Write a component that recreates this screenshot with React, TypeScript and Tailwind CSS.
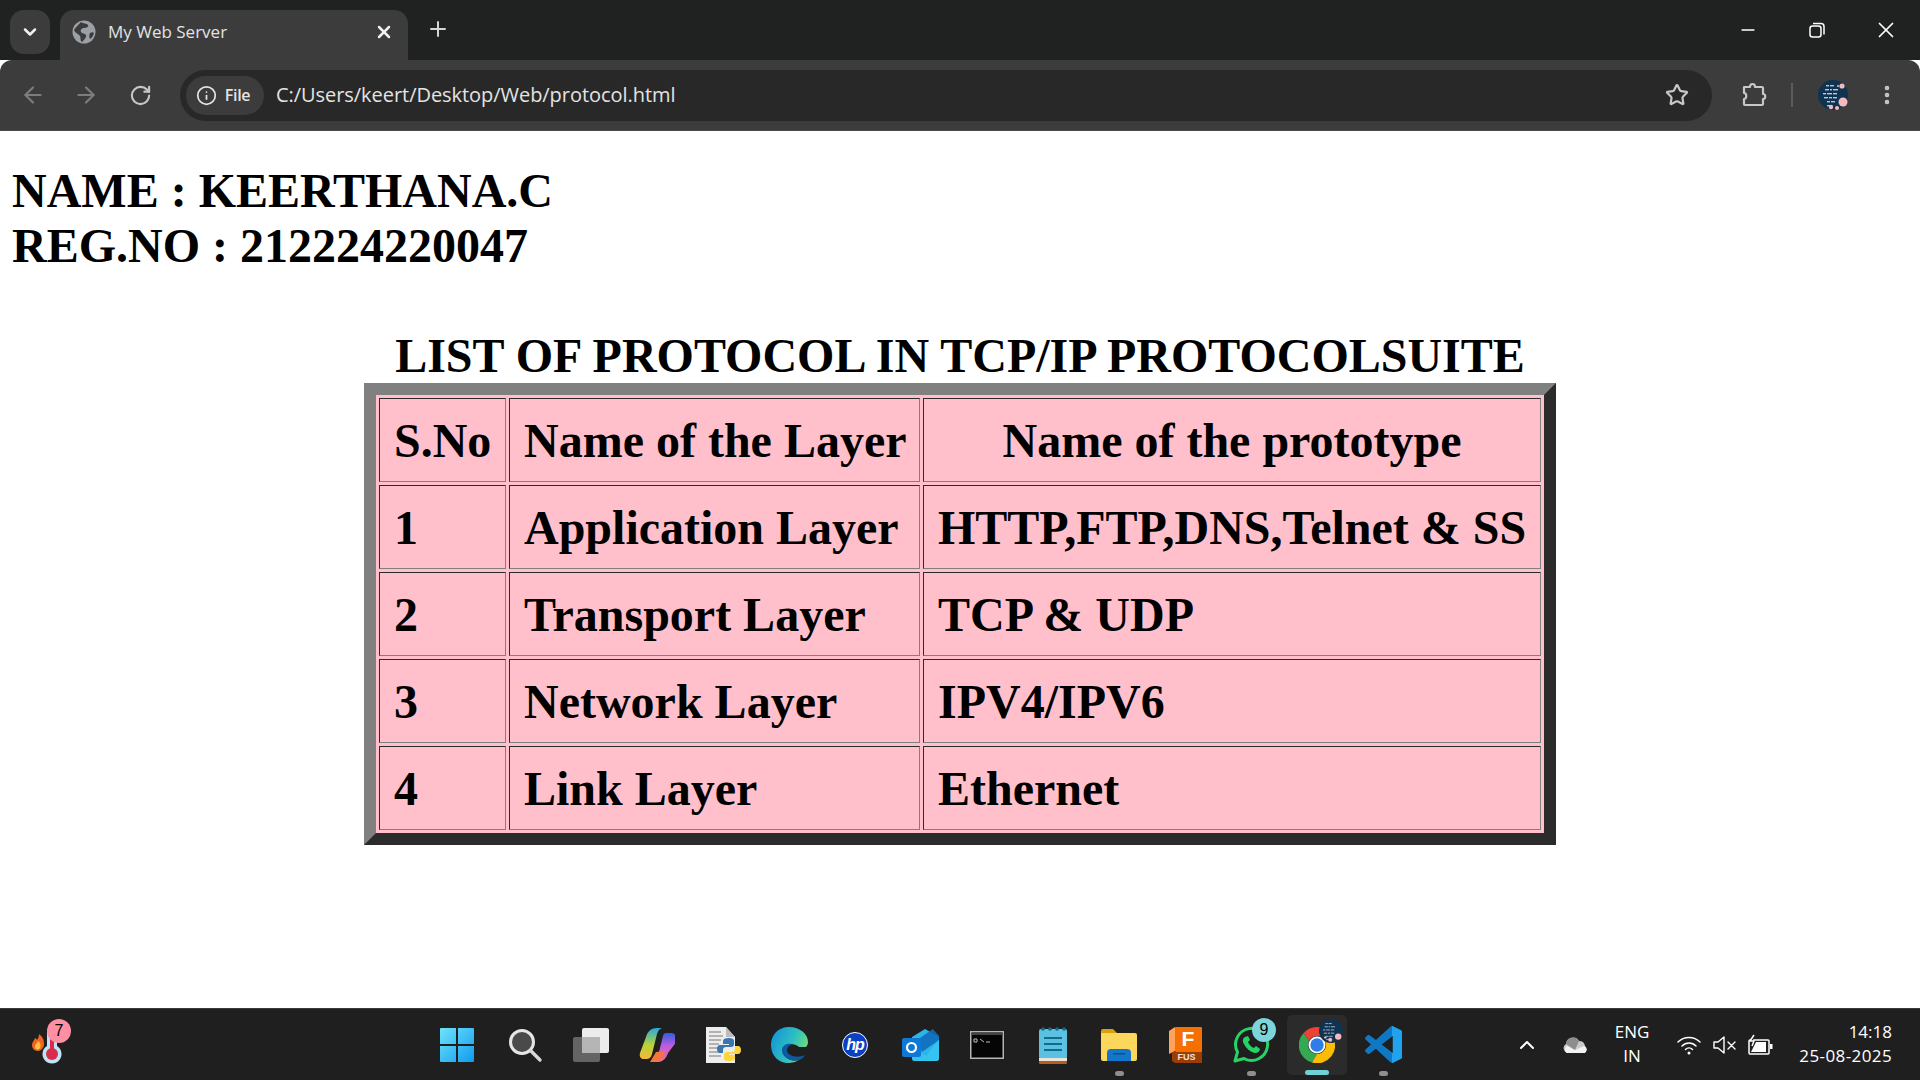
import React from "react";
import { ArrowLeft, ArrowRight, ChevronDown, ChevronUp, Info, Minus, MoreVertical, Plus, RotateCw, Star, X } from "lucide-react";

const rows = [
	["1", "Application Layer", "HTTP,FTP,DNS,Telnet & SS"],
	["2", "Transport Layer", "TCP & UDP"],
	["3", "Network Layer", "IPV4/IPV6"],
	["4", "Link Layer", "Ethernet"],
];

const cell =
	"border border-t-[#2b2b2b] border-l-[#2b2b2b] border-r-[#808080] border-b-[#808080] h-[84px] px-[14px] py-0 text-left whitespace-nowrap";

// tiny handwriting marks on the profile picture
const scribble = [
	[8, 5, 3], [12, 5, 4], [7, 9, 4], [12, 9, 2], [15, 9, 5], [5, 13, 3], [9, 13, 5], [15, 13, 4],
	[6, 17, 4], [11, 17, 3], [15, 17, 4], [9, 21, 3], [13, 21, 4], [9, 25, 4],
];

const TabGlobe = () => (
	<svg width="24" height="24" viewBox="0 0 24 24">
		<circle cx="12" cy="12" r="11.500" fill="#9aa0a6" />
		<path d="M9 2c2 2 6 1 7 3s-2 3-4 3-4 2-3 4 4 1 5 3-2 5-4 7c-2-1-1-4-2-6S3 13 2 10c2-3 5-6 7-8z" fill="#3c3c3c" />
		<path d="M18 13c2-1 3-1 4 0-1 3-2 5-4 6-1-2-1-4 0-6z" fill="#3c3c3c" />
	</svg>
);

const Puzzle = () => (
	<svg width="26" height="26" viewBox="0 0 26 26" fill="none" stroke="#c7c7c7" strokeWidth="2.200" strokeLinejoin="round">
		<path d="M3 5h6c0-4 5-4 5 0h7c1 0 1 1 1 1v6c3 0 3 5 0 5v5c0 1-1 1-1 1H4c-1 0-1-1-1-1v-5c3 0 3-6 0-6z" />
	</svg>
);

const Avatar = () => (
	<svg width="30" height="30" viewBox="0 0 30 30">
		<circle cx="15" cy="15" r="15" fill="#0f3350" />
		<g fill="#b9c9d6">
			{scribble.map(([x, y, w]) => (
				<rect key={`${x}-${y}`} x={x} y={y} width={w} height="1.400" />
			))}
		</g>
		<g fill="#f7b9c0">
			<circle cx="24" cy="6" r="2.600" />
			<circle cx="25" cy="22" r="4.500" />
			<circle cx="13" cy="27" r="2.200" />
			<circle cx="19" cy="28" r="2" />
			<circle cx="20" cy="6" r="1" />
		</g>
	</svg>
);

const Thermo = () => (
	<div className="relative h-[48px] w-[60px]">
		<svg className="absolute left-0 top-0" width="60" height="48" viewBox="0 0 60 48">
			<path d="M24 13c4 3 5 6 5 10 0 4-3 7-6 7-4 0-6-3-6-6 0-3 2-4 3-7 1 1 2 1 2 2 1-2 2-3 2-6z" fill="#f0641e" />
			<path d="M23 20c3 2 3 5 2 7s-5 2-5-1 2-3 3-6z" fill="#ffc23d" />
			<path d="M32 12a5 5 0 0 1 10 0v13a9.500 9.500 0 1 1-10 0z" fill="#bfe3f7" />
			<rect x="35" y="12" width="4" height="16" fill="#d92b4b" />
			<circle cx="37" cy="33" r="6" fill="#d92b4b" />
		</svg>
		<span className="absolute left-[32px] top-[-2px] flex h-[24px] w-[24px] items-center justify-center rounded-full bg-[#ff8fa3] font-['Liberation_Sans',sans-serif] text-[16px] text-black">
			7
		</span>
	</div>
);

const WinLogo = () => (
	<svg className="mr-[4px]" width="36" height="36" viewBox="0 0 36 36">
		<defs>
			<linearGradient id="win" x1="0" y1="0" x2="1" y2="1">
				<stop offset="0" stopColor="#6fe3fb" />
				<stop offset="1" stopColor="#0f9bf0" />
			</linearGradient>
		</defs>
		<path d="M1 2a1 1 0 0 1 1-1h15v16H1zM19 1h15a1 1 0 0 1 1 1v15H19zM1 19h16v16H2a1 1 0 0 1-1-1zM19 19h16v15a1 1 0 0 1-1 1H19z" fill="url(#win)" />
	</svg>
);

const SearchIcon = () => (
	<svg width="36" height="36" viewBox="0 0 36 36" fill="none">
		<circle cx="15" cy="15" r="11.500" fill="#4a4a4a" stroke="#e6e6e6" strokeWidth="3" />
		<path d="M24 24l9 9" stroke="#d8d8d8" strokeWidth="3.400" strokeLinecap="round" />
	</svg>
);

const TaskView = () => (
	<svg width="38" height="36" viewBox="0 0 38 36">
		<rect x="10" y="1" width="27" height="25" rx="2" fill="#ececec" />
		<rect x="1" y="10" width="27" height="25" rx="2" fill="#6b6b6b" fillOpacity="0.9" />
		<rect x="10" y="10" width="18" height="16" fill="#b5b5b5" />
	</svg>
);

const Copilot = () => (
	<svg width="36" height="36" viewBox="0 0 36 36">
		<defs>
			<linearGradient id="cpl" x1="0" y1="0" x2="0" y2="1">
				<stop offset="0" stopColor="#2aa7e0" />
				<stop offset="0.55" stopColor="#b7d433" />
				<stop offset="1" stopColor="#f6b73c" />
			</linearGradient>
			<linearGradient id="cpr" x1="0" y1="0" x2="0" y2="1">
				<stop offset="0" stopColor="#2f5fe0" />
				<stop offset="0.45" stopColor="#c25be0" />
				<stop offset="1" stopColor="#f0708a" />
			</linearGradient>
		</defs>
		<path d="M7 10c1-3 3-9 11-9h5c-3 1-4 3-5 6l-5 20c-1 4-3 5-6 5H5c-3 0-5-2-4-6z" fill="url(#cpl)" />
		<path d="M29 26c-1 3-4 9-10 9h-6c3-1 5-3 6-6l5-20c1-3 2-3 4-3h3c5 0 8 3 7 8z" fill="url(#cpr)" />
		<path d="M11 35l6-10 9-1c-2 6-4 11-9 11z" fill="#f4743f" />
	</svg>
);

const PyDoc = () => (
	<svg width="36" height="38" viewBox="0 0 36 38">
		<path d="M1 1h20l9 10v26H1z" fill="#ededed" />
		<path d="M21 1v10h9z" fill="#bdbdbd" />
		<g stroke="#777" strokeWidth="1">
			<path d="M4 6h12M4 10h14M4 14h12M4 18h10M4 22h10M4 26h12M4 30h12" />
		</g>
		<path d="M24 12c-4 0-6 1-6 3v3h6v1h-9c-2 0-3 2-3 4s1 4 3 4h3v-3c0-2 1-3 3-3h5c2 0 3-1 3-3v-3c0-2-2-3-5-3z" fill="#3a75b0" />
		<path d="M24 35c4 0 6-1 6-3v-3h-6v-1h9c2 0 3-2 3-4s-1-4-3-4h-3v3c0 2-1 3-3 3h-5c-2 0-3 1-3 3v3c0 2 1 3 4 3z" fill="#ffd43b" />
	</svg>
);

const Edge = () => (
	<svg width="38" height="38" viewBox="0 0 38 38">
		<defs>
			<linearGradient id="edgeA" x1="0" y1="0.3" x2="1" y2="0.7">
				<stop offset="0" stopColor="#1597d6" />
				<stop offset="0.55" stopColor="#2fc0c0" />
				<stop offset="1" stopColor="#7be06a" />
			</linearGradient>
		</defs>
		<path d="M19 1C8 1 1 9 1 19c0 11 8 18 17 18 4 0 8-1 11-3-7 2-15-1-15-9 0-4 3-7 7-7 5 0 8 3 8 3h7c1-1 2-3 2-5C38 8 30 1 19 1z" fill="url(#edgeA)" />
		<path d="M12 23c-1 8 8 13 17 11 3-1 5-3 6-5-4 2-9 2-12 1-4-1-6-3-6-6 0-3 3-5 5-6-5-1-9 1-10 5z" fill="#0c59a4" />
	</svg>
);

const HpLogo = () => (
	<div className="flex h-[26px] w-[26px] items-center justify-center rounded-full border border-white bg-[#0b3fc4]">
		<span className="font-['Liberation_Sans',sans-serif] text-[16px] font-bold italic leading-none tracking-[-1px] text-white">hp</span>
	</div>
);

const Outlook = () => (
	<svg width="38" height="34" viewBox="0 0 38 34">
		<path d="M10 9l13-8 14 8v21a3 3 0 0 1-3 3H13a3 3 0 0 1-3-3z" fill="#2cb6e8" />
		<path d="M15 12l16-11 6 7v4L20 24z" fill="#0f6cbd" fillOpacity="0.9" />
		<path d="M10 20l14 8 13-16v18a3 3 0 0 1-3 3H13a3 3 0 0 1-3-3z" fill="#35c4ef" />
		<rect x="0" y="10" width="19" height="19" rx="2" fill="#0f78d4" />
		<circle cx="9.500" cy="19.500" r="4.500" fill="none" stroke="#fff" strokeWidth="2.200" />
	</svg>
);

const Cmd = () => (
	<svg width="34" height="28" viewBox="0 0 34 28">
		<rect x="0.750" y="0.750" width="32.500" height="26.500" fill="#050505" stroke="#b5b5b5" strokeWidth="1.500" />
		<rect x="1.500" y="1.500" width="31" height="2.500" fill="#444" />
		<path d="M4 8h3v3H4zM10 8l4 3M16 11h4" stroke="#bdbdbd" strokeWidth="1" fill="none" />
	</svg>
);

const Notepad = () => (
	<svg width="30" height="38" viewBox="0 0 30 38">
		<rect x="1" y="3" width="28" height="30" rx="2" fill="#5cc0e0" />
		<rect x="1" y="32" width="28" height="3" fill="#e9e4da" />
		<rect x="1" y="35" width="28" height="3" rx="1" fill="#b85c1e" />
		<g fill="#0e6d8f">
			<circle cx="5" cy="3" r="1.800" />
			<circle cx="12" cy="3" r="1.800" />
			<circle cx="19" cy="3" r="1.800" />
			<circle cx="26" cy="3" r="1.800" />
			<rect x="6" y="11" width="18" height="2" />
			<rect x="6" y="17" width="18" height="2" />
			<rect x="6" y="23" width="18" height="2" />
		</g>
	</svg>
);

const Folder = () => (
	<svg width="38" height="34" viewBox="0 0 38 34">
		<path d="M1 3a2 2 0 0 1 2-2h10l4 4h-16z" fill="#d99f0c" />
		<path d="M1 5h34a2 2 0 0 1 2 2v24a2 2 0 0 1-2 2H3a2 2 0 0 1-2-2z" fill="#fbd75b" />
		<path d="M7 33v-8a4 4 0 0 1 4-4h16a4 4 0 0 1 4 4v8z" fill="#1377c9" />
		<rect x="13" y="25" width="12" height="1.500" fill="#0a4f8f" />
	</svg>
);

const Fusion = () => (
	<div className="relative h-[36px] w-[33px]">
		<svg className="absolute left-0 top-0" width="33" height="36" viewBox="0 0 33 36">
			<path d="M0 4l6-4v24l-6 3z" fill="#ffa25c" />
			<rect x="6" y="0" width="27" height="25" rx="1" fill="#f57000" />
			<path d="M3 25h30v11H6l-3-2z" fill="#9a3d06" />
		</svg>
		<span className="absolute left-[6px] top-[1px] w-[27px] text-center font-['Liberation_Sans',sans-serif] text-[21px] font-bold leading-[22px] text-white">F</span>
		<span className="absolute left-[3px] top-[25px] w-[30px] text-center font-['Liberation_Sans',sans-serif] text-[9px] font-bold leading-[11px] text-[#f4e3d6]">FUS</span>
	</div>
);

const Whatsapp = () => (
	<div className="relative h-[38px] w-[38px]">
		<svg className="absolute left-0 top-0" width="38" height="38" viewBox="0 0 38 38" fill="none">
			<path d="M3 35l2.500-9A16 16 0 1 1 12 32.500z" stroke="#25d366" strokeWidth="3" strokeLinejoin="round" />
			<path d="M13 11c-2 1-3 4-1 7 2 4 6 8 11 9 3 0 5-2 5-4l-4-3-2 2c-3-1-5-4-6-6l2-2-2-4z" fill="#25d366" />
		</svg>
		<span className="absolute left-[20px] top-[-8px] flex h-[24px] w-[24px] items-center justify-center rounded-full bg-[#7bd5da] font-['Liberation_Sans',sans-serif] text-[16px] text-black">
			9
		</span>
	</div>
);

const Chrome = () => (
	<div className="relative h-[36px] w-[36px]">
		<svg className="absolute left-0 top-0" width="36" height="36" viewBox="0 0 36 36">
			<path d="M18 0a18 18 0 0 1 15.600 9H18a9 9 0 0 0-8 5L4.500 6A18 18 0 0 1 18 0z" fill="#ea4335" />
			<path d="M4.500 6L10 14a9 9 0 0 0 8 13l-5 8.500A18 18 0 0 1 4.500 6z" fill="#34a853" />
			<path d="M33.600 9A18 18 0 0 1 13 35.500L18 27a9 9 0 0 0 7.500-14l-1-4z" fill="#fbbc04" />
			<circle cx="18" cy="18" r="8.500" fill="#fff" />
			<circle cx="18" cy="18" r="6.700" fill="#2f7de8" />
		</svg>
		<svg className="absolute left-[20px] top-[-8px]" width="24" height="24" viewBox="0 0 30 30">
			<circle cx="15" cy="15" r="15" fill="#0f3350" />
			<g fill="#8ea5b8">
				{scribble.map(([x, y, w]) => (
					<rect key={`${x}-${y}`} x={x} y={y} width={w} height="1.400" />
				))}
			</g>
			<g fill="#f7b9c0">
				<circle cx="24" cy="22" r="4" />
				<circle cx="14" cy="26" r="2.500" />
				<circle cx="8" cy="23" r="1.500" />
			</g>
		</svg>
	</div>
);

const VsCode = () => (
	<svg width="37" height="37" viewBox="0 0 100 100">
		<defs>
			<linearGradient id="vsc" x1="0" y1="0" x2="1" y2="0">
				<stop offset="0.72" stopColor="#0f78c4" />
				<stop offset="0.72" stopColor="#1fa3ee" />
			</linearGradient>
		</defs>
		<path
			fillRule="evenodd"
			fill="url(#vsc)"
			d="M70.900 99.300c1.600.6 3.400.6 5-.2l20.600-9.900c2.200-1 3.500-3.200 3.500-5.600V16.400c0-2.400-1.400-4.600-3.500-5.600L75.900.9c-2.100-1-4.500-.8-6.400.6-.3.2-.5.4-.7.7L29.400 38.100 12.200 25c-1.600-1.200-3.800-1.100-5.300.2L1.400 30.300c-1.800 1.600-1.800 4.500 0 6.100L16.300 50 1.400 63.600c-1.800 1.600-1.800 4.500 0 6.100l5.500 5c1.500 1.300 3.700 1.400 5.300.2l17.200-13.100 39.400 35.900c.6.600 1.300 1.100 2.100 1.400zM75 27.300L45.100 50 75 72.700z"
		/>
	</svg>
);

const Cloud = () => (
	<svg width="26" height="18" viewBox="0 0 26 18">
		<path d="M5 17a5 5 0 0 1-1-9 7 7 0 0 1 13-3 6 6 0 0 1 6 5 4 4 0 0 1-1 7z" fill="#c9c9c9" />
		<path d="M5 17a4 4 0 0 1 0-7l8 4 9-4a4 4 0 0 1 1 7z" fill="#f2f2f2" />
		<path d="M4 8a7 7 0 0 1 13-3l-4 9z" fill="#8d8d8d" />
	</svg>
);

const Wifi = () => (
	<svg width="24" height="20" viewBox="0 0 24 20" fill="none" stroke="#fff" strokeWidth="1.500" strokeLinecap="round">
		<path d="M1 7c6-6 16-6 22 0M5 11c4-4 10-4 14 0M8.500 14.500c2-2 5-2 7 0" />
		<circle cx="12" cy="18" r="1.500" fill="#fff" stroke="none" />
	</svg>
);

const Muted = () => (
	<svg width="24" height="20" viewBox="0 0 24 20" fill="none" stroke="#fff" strokeWidth="1.400" strokeLinejoin="round">
		<path d="M1 7h4l6-5v16l-6-5H1z" />
		<path d="M15 7l7 7M22 7l-7 7" strokeLinecap="round" />
	</svg>
);

const Battery = () => (
	<svg width="26" height="22" viewBox="0 0 26 22" fill="none" stroke="#fff" strokeWidth="1.500" strokeLinejoin="round">
		<path d="M3 6h18a1 1 0 0 1 1 1v12a1 1 0 0 1-1 1H3a1 1 0 0 1-1-1V7a1 1 0 0 1 1-1z" />
		<rect x="23" y="10" width="2.500" height="5" fill="#fff" stroke="none" />
		<path d="M4 18l5-10h10v10z" fill="#fff" stroke="none" />
		<path d="M7 1L3 7h4l-2 5" stroke="#fff" fill="#1c1c1c" />
	</svg>
);

const centerIcons: { key: string; node: React.ReactNode; open?: boolean }[] = [
	{ key: "win", node: <WinLogo /> },
	{ key: "search", node: <SearchIcon /> },
	{ key: "tasks", node: <TaskView /> },
	{ key: "copilot", node: <Copilot /> },
	{ key: "pydoc", node: <PyDoc /> },
	{ key: "edge", node: <Edge /> },
	{ key: "hp", node: <HpLogo /> },
	{ key: "outlook", node: <Outlook /> },
	{ key: "cmd", node: <Cmd /> },
	{ key: "notepad", node: <Notepad /> },
	{ key: "folder", node: <Folder />, open: true },
	{ key: "fusion", node: <Fusion /> },
	{ key: "whatsapp", node: <Whatsapp />, open: true },
];

export default function App() {
	return (
		<div className="flex h-[1080px] w-[1920px] flex-col overflow-hidden bg-white">
			{/* tab strip */}
			<div className="flex h-[60px] shrink-0 items-end bg-[#202221] font-['Open_Sans',sans-serif]">
				<div className="mb-[6px] ml-[10px] flex h-[44px] w-[40px] items-center justify-center rounded-[14px] bg-[#3c3c3c]">
					<ChevronDown size={20} strokeWidth={3} color="#f0f0f0" />
				</div>
				<div className="ml-[10px] flex h-[50px] w-[348px] items-center rounded-t-[14px] bg-[#3c3c3c] pb-[6px] pl-[12px] pr-[14px]">
					<TabGlobe />
					<span className="ml-[12px] flex-1 text-[17px] text-[#e3e3e3]">My Web Server</span>
					<X size={20} strokeWidth={3} color="#f0f0f0" />
				</div>
				<div className="mb-[19px] ml-[18px]">
					<Plus size={24} strokeWidth={2} color="#d5d5d5" />
				</div>
				<div className="flex-1" />
				<div className="mb-[17px] flex items-center text-white">
					<div className="flex w-[69px] justify-center"><Minus size={20} strokeWidth={2} /></div>
					<div className="flex w-[69px] justify-center">
						<svg width="16" height="16" viewBox="0 0 16 16" fill="none" stroke="#fff" strokeWidth="1.500">
							<rect x="1" y="4" width="11" height="11" rx="2.500" />
							<path d="M4 1.500h8a3 3 0 0 1 3 3v8" />
						</svg>
					</div>
					<div className="flex w-[69px] justify-center"><X size={26} strokeWidth={1.6} /></div>
				</div>
			</div>

			{/* toolbar */}
			<div className="flex h-[71px] shrink-0 items-center rounded-t-[12px] border-b border-[#4a4a4a] bg-[#3c3c3c] font-['Open_Sans',sans-serif]">
				<div className="flex w-[180px] items-center pl-[20px]">
					<div className="flex w-[53px]"><ArrowLeft size={26} strokeWidth={2} color="#7d7d7d" /></div>
					<div className="flex w-[56px]"><ArrowRight size={26} strokeWidth={2} color="#7d7d7d" /></div>
					<RotateCw size={23} strokeWidth={2.200} color="#c7c7c7" />
				</div>
				<div className="flex h-[51px] w-[1532px] items-center rounded-full bg-[#282828] pl-[6px] pr-[23px]">
					<div className="flex h-[39px] w-[78px] items-center justify-center gap-[8px] rounded-full bg-[#3c3c3c] pr-[4px]">
						<Info size={21} strokeWidth={2} color="#e3e3e3" />
						<span className="text-[16px] font-semibold tracking-[-0.3px] text-[#e3e3e3]">File</span>
					</div>
					<span className="ml-[12px] flex-1 text-[20px] tracking-[-0.05px] text-[#e3e3e3]">C:/Users/keert/Desktop/Web/protocol.html</span>
					<Star size={24} strokeWidth={2.200} color="#c7c7c7" />
				</div>
				<div className="ml-[29px] flex"><Puzzle /></div>
				<div className="ml-[24px] h-[24px] w-[2px] bg-[#5c5c5c]" />
				<div className="ml-[25px] flex"><Avatar /></div>
				<div className="ml-[27px] flex"><MoreVertical size={24} strokeWidth={2.600} color="#c7c7c7" /></div>
			</div>

			{/* page */}
			<main className="flex-1 font-['Liberation_Serif',serif] font-bold text-black">
				<div className="pl-[12px] pt-[32px] text-[48px] leading-[55px]">
					<div>NAME : KEERTHANA.C</div>
					<div>REG.NO : 212224220047</div>
				</div>
				<table className="mx-auto mt-[55px] w-[1192px] table-fixed border-separate border-spacing-[3px] border-[12px] border-t-[#808080] border-l-[#808080] border-r-[#2b2b2b] border-b-[#2b2b2b] bg-[#ffc0cb] text-[48px] leading-[55px]">
					<caption className="bg-white text-center">LIST OF PROTOCOL IN TCP/IP PROTOCOLSUITE</caption>
					<thead>
						<tr>
							<th className={`${cell} w-[127px]`}>S.No</th>
							<th className={`${cell} w-[411px]`}>Name of the Layer</th>
							<th className="h-[84px] whitespace-nowrap border border-t-[#2b2b2b] border-l-[#2b2b2b] border-r-[#808080] border-b-[#808080] px-[14px] py-0 text-center">Name of the prototype</th>
						</tr>
					</thead>
					<tbody>
						{rows.map((row) => (
							<tr key={row[0]}>
								{row.map((text) => (
									<td key={text} className={cell}>{text}</td>
								))}
							</tr>
						))}
					</tbody>
				</table>
			</main>

			{/* taskbar */}
			<div className="flex h-[72px] shrink-0 items-center border-t border-[#3a3a3a] bg-[#1f1f1f] font-['Open_Sans',sans-serif] text-white">
				<div className="flex w-[426px] shrink-0 pl-[15px]"><Thermo /></div>
				{centerIcons.map((icon) => (
					<div key={icon.key} className="relative flex h-[71px] w-[66px] shrink-0 items-center justify-center">
						{icon.node}
						{icon.open && <span className="absolute bottom-[4px] h-[5px] w-[9px] rounded-full bg-[#8f8f8f]" />}
					</div>
				))}
				<div className="relative mx-[3px] flex h-[60px] w-[60px] shrink-0 items-center justify-center rounded-[5px] bg-[#2b2b2b]">
					<Chrome />
					<span className="absolute bottom-0 h-[5px] w-[24px] rounded-full bg-[#6fd0d6]" />
				</div>
				<div className="relative flex h-[71px] w-[66px] shrink-0 items-center justify-center">
					<VsCode />
					<span className="absolute bottom-[4px] h-[5px] w-[9px] rounded-full bg-[#8f8f8f]" />
				</div>
				<div className="ml-[99px] flex shrink-0 items-center">
					<ChevronUp size={24} strokeWidth={2} color="#fff" />
				</div>
				<div className="ml-[23px] flex shrink-0"><Cloud /></div>
				<div className="mb-[1px] ml-[12px] w-[64px] shrink-0 text-center text-[17px] leading-[24px]">
					<div>ENG</div>
					<div>IN</div>
				</div>
				<div className="ml-[13px] flex shrink-0"><Wifi /></div>
				<div className="ml-[12px] flex shrink-0"><Muted /></div>
				<div className="ml-[10px] flex shrink-0"><Battery /></div>
				<div className="mb-[2px] ml-[15px] w-[104px] shrink-0 text-right text-[17px] leading-[24px]">
					<div>14:18</div>
					<div className="tracking-[0.4px]">25-08-2025</div>
				</div>
			</div>
		</div>
	);
}
